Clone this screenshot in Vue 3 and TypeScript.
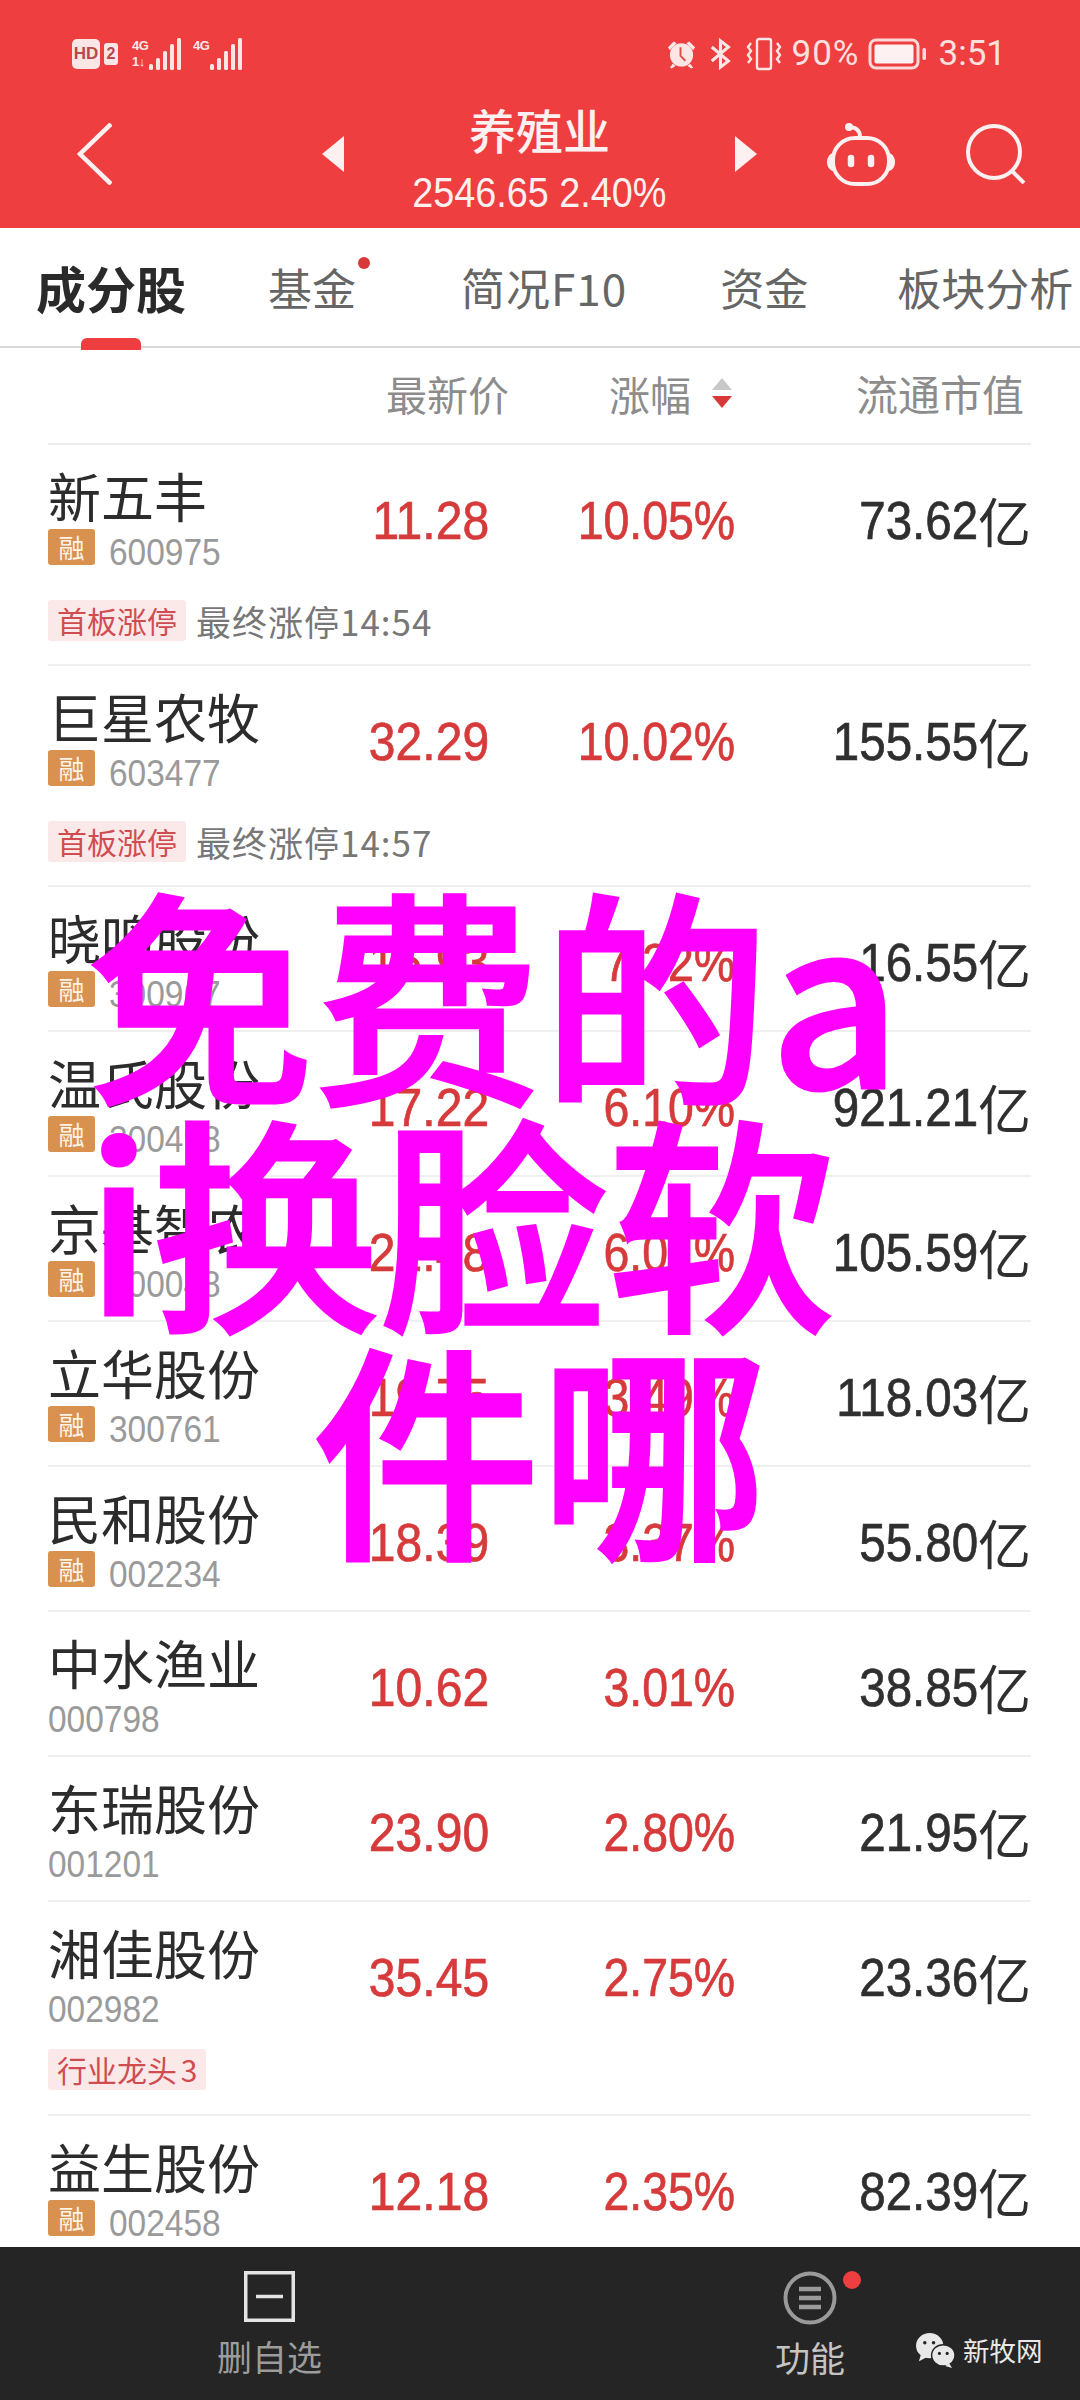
<template>
  <div class="page">
    <header class="top">
      <div class="status">
        <div class="status-left">
          <span class="hd">HD</span>
          <span class="sim">2</span>
          <span class="net">
            <span class="net-type">4G<br />1↓</span>
            <svg width="32" height="32" viewBox="0 0 32 32"><rect v-for="b in signalBars" :key="b.x" :x="b.x" :y="b.y" width="4" :height="32 - b.y" rx="1.5" fill="#fbe6e6" /></svg>
          </span>
          <span class="net">
            <span class="net-type">4G</span>
            <svg width="32" height="32" viewBox="0 0 32 32"><rect v-for="b in signalBars" :key="b.x" :x="b.x" :y="b.y" width="4" :height="32 - b.y" rx="1.5" fill="#fbe6e6" /></svg>
          </span>
        </div>
        <div class="status-right">
          <svg width="31" height="32" viewBox="0 0 32 32" fill="#fbe6e6"><circle cx="16" cy="17" r="12" /><path d="M2 9 8 3l3 2-7 7zM30 9l-6-6-3 2 7 7zM7 26l-3 4 2 1 4-3zM25 26l3 4-2 1-4-3z" /><path d="M15 9v9l5 5" fill="none" stroke="#d9504f" stroke-width="2" /></svg>
          <svg class="st-bt" width="21" height="32" viewBox="0 0 24 34" fill="none" stroke="#fbe6e6" stroke-width="3.5"><path d="M2 9l19 16-9 7V2l9 7L2 25" /></svg>
          <svg class="st-vib" width="38" height="34" viewBox="0 0 38 34" fill="none" stroke="#fbe6e6" stroke-width="2.4"><rect x="12" y="2" width="14" height="30" rx="2" /><path d="M6 6 3 10l3 4-3 4 3 4-3 4M32 6l3 4-3 4 3 4-3 4 3 4" /></svg>
          <span class="pct">90%</span>
          <svg class="battery" width="59" height="32" viewBox="0 0 58 32"><rect x="1.5" y="2" width="48" height="28" rx="6" fill="none" stroke="#fbd9d9" stroke-width="3" /><rect x="6" y="6.5" width="39" height="19" rx="2" fill="#fdf1f1" /><rect x="54" y="10" width="3.5" height="12" rx="1.5" fill="#fbd9d9" /></svg>
          <span class="clock">3:51</span>
        </div>
      </div>
      <div class="nav">
        <svg class="back" width="35" height="62" viewBox="0 0 35 62" fill="none" stroke="#fdf0f0" stroke-width="4.5"><path d="M34 1 3 31l31 30" /></svg>
        <div class="switcher">
          <span class="arrow arrow-left"></span>
          <div class="title">
            <div class="title-name">养殖业</div>
            <div class="title-sub"><span>2546.65 2.40%</span></div>
          </div>
          <span class="arrow arrow-right"></span>
        </div>
        <svg class="robot" width="70" height="63" viewBox="0 0 70 63" fill="none" stroke="#fdf0f0" stroke-width="4"><path d="M23 4c6 0 11 3 11 10" /><circle cx="23" cy="4" r="4" fill="#fdf0f0" stroke="none" /><rect x="7" y="15" width="56" height="46" rx="22" /><path d="M7 30c-4 1-6 5-6 9s2 8 6 9zM63 30c4 1 6 5 6 9s-2 8-6 9z" fill="#fdf0f0" stroke="none" /><path d="M25 35v6M45 35v6" stroke-width="6.5" stroke-linecap="round" /></svg>
        <svg class="search" width="60" height="60" viewBox="0 0 60 60" fill="none" stroke="#fdf0f0" stroke-width="4"><circle cx="28" cy="28" r="26" /><path d="M46 47l12 12" /></svg>
      </div>
    </header>

    <nav class="tabs">
      <div v-for="t in tabs" :key="t.label" class="tab" :class="{ active: t.active }">
        {{ t.label }}
        <i v-if="t.dot" class="tab-dot"></i>
        <i v-if="t.active" class="tab-bar"></i>
      </div>
    </nav>

    <div class="head">
      <span class="col-price">最新价</span>
      <span class="col-pct">涨幅<i class="sort"><b class="up"></b><b class="down"></b></i></span>
      <span class="col-cap">流通市值</span>
    </div>

    <section class="list">
      <article v-for="s in stocks" :key="s.code" class="row">
        <div class="row-main">
          <div class="stock">
            <div class="name">{{ s.name }}</div>
            <div class="code-line">
              <span v-if="s.margin" class="margin">融</span>
              <span class="code">{{ s.code }}</span>
            </div>
          </div>
          <div class="num price"><span>{{ s.price }}</span></div>
          <div class="num change"><span>{{ s.change }}</span></div>
          <div class="num cap"><span>{{ s.cap }}</span><em class="yi">亿</em></div>
        </div>
        <div v-if="s.tag" class="tag-line" :class="{ 'has-note': s.note }">
          <span class="tag">{{ s.tag }}</span>
          <span v-if="s.note" class="note">{{ s.note }}</span>
        </div>
      </article>
    </section>

    <footer class="bottom">
      <div class="action action-del">
        <svg width="51" height="51" viewBox="0 0 51 51" fill="none" stroke="#e4e4e4" stroke-width="3.5"><rect x="1.75" y="1.75" width="47.5" height="47.5" /><path d="M12 25.5h27" /></svg>
        <span>删自选</span>
      </div>
      <div class="action action-fn">
        <svg width="54" height="54" viewBox="0 0 54 54" fill="none" stroke="#9a9a9a"><circle cx="27" cy="27" r="24.5" stroke-width="4" /><path d="M16 18h22M16 27h22M16 36h22" stroke-width="4.5" /></svg>
        <i class="fn-dot"></i>
        <span>功能</span>
      </div>
      <div class="mark">
        <svg width="43" height="37" viewBox="0 0 42 38" fill="#e8e8e8"><ellipse cx="15" cy="14" rx="14" ry="13" /><path d="M6 23l-2 7 8-4z" /><ellipse cx="29" cy="24" rx="12" ry="11" stroke="#252525" stroke-width="1.5" /><path d="M35 32l3 5-7-2z" /><circle cx="10" cy="11" r="1.8" fill="#252525" /><circle cx="19" cy="11" r="1.8" fill="#252525" /><circle cx="25" cy="22" r="1.6" fill="#252525" /><circle cx="33" cy="22" r="1.6" fill="#252525" /></svg>
        <span>新牧网</span>
      </div>
    </footer>

    <div class="overlay">
      <div v-for="line in overlayLines" :key="line" class="overlay-line">{{ line }}</div>
    </div>
  </div>
</template>

<script setup lang="ts">
interface Stock {
  name: string
  code: string
  price: string
  change: string
  cap: string
  margin?: boolean
  tag?: string
  note?: string
}

const signalBars = [
  { x: 0, y: 26 },
  { x: 7, y: 20 },
  { x: 14, y: 13 },
  { x: 21, y: 6 },
  { x: 28, y: 0 }
]

const tabs = [
  { label: '成分股', active: true },
  { label: '基金', dot: true },
  { label: '简况F10' },
  { label: '资金' },
  { label: '板块分析' }
]

const overlayLines = ['免费的a', 'i换脸软', '件哪']

const stocks: Stock[] = [
  { name: '新五丰', code: '600975', price: '11.28', change: '10.05%', cap: '73.62', margin: true, tag: '首板涨停', note: '最终涨停14:54' },
  { name: '巨星农牧', code: '603477', price: '32.29', change: '10.02%', cap: '155.55', margin: true, tag: '首板涨停', note: '最终涨停14:57' },
  { name: '晓鸣股份', code: '300967', price: '16.93', change: '7.32%', cap: '16.55', margin: true },
  { name: '温氏股份', code: '300498', price: '17.22', change: '6.10%', cap: '921.21', margin: true },
  { name: '京基智农', code: '000048', price: '21.48', change: '6.01%', cap: '105.59', margin: true },
  { name: '立华股份', code: '300761', price: '19.75', change: '3.49%', cap: '118.03', margin: true },
  { name: '民和股份', code: '002234', price: '18.39', change: '3.37%', cap: '55.80', margin: true },
  { name: '中水渔业', code: '000798', price: '10.62', change: '3.01%', cap: '38.85' },
  { name: '东瑞股份', code: '001201', price: '23.90', change: '2.80%', cap: '21.95' },
  { name: '湘佳股份', code: '002982', price: '35.45', change: '2.75%', cap: '23.36', tag: '行业龙头 3' },
  { name: '益生股份', code: '002458', price: '12.18', change: '2.35%', cap: '82.39', margin: true }
]
</script>

<style>
html,
body {
  margin: 0;
  background: #fff;
}
</style>

<style scoped>
.page {
  position: relative;
  width: 1080px;
  height: 2400px;
  overflow: hidden;
  display: flex;
  flex-direction: column;
  background: #fff;
  font-family: "Noto Sans CJK SC", "Noto Sans", sans-serif;
}

.top {
  height: 228px;
  flex: none;
  background: #ee3e3f;
  color: #fdf0f0;
}

.status {
  height: 52px;
  padding: 28px 74px 0 72px;
  display: flex;
  justify-content: space-between;
  align-items: center;
}

.status-left,
.status-right {
  display: flex;
  align-items: center;
}

.status-right svg {
  flex: none;
}

.st-bt {
  margin-left: 13px;
}

.st-vib {
  margin-left: 14px;
}

.hd {
  width: 28px;
  height: 30px;
  border-radius: 5px;
  background: #fbe6e6;
  color: #b8484a;
  font: 700 17px/30px "Liberation Sans", sans-serif;
  text-align: center;
}

.sim {
  margin-left: 4px;
  width: 14px;
  height: 22px;
  border-radius: 3px;
  background: #fbe6e6;
  color: #b8484a;
  font: 700 16px/22px "Liberation Sans", sans-serif;
  text-align: center;
}

.net {
  display: flex;
  align-items: flex-end;
  margin-left: 14px;
  height: 32px;
}

.net + .net {
  margin-left: 12px;
}

.net-type {
  align-self: flex-start;
  font: 700 13px/16px "Liberation Sans", sans-serif;
  letter-spacing: -0.5px;
  color: #fbe6e6;
  width: 17px;
  white-space: nowrap;
}

.pct,
.clock {
  font: 400 35px/40px "Roboto", sans-serif;
  color: #fbe0e0;
}

.pct {
  margin-left: 9px;
  letter-spacing: 1px;
}

.battery {
  margin-left: 8px;
}

.clock {
  margin-left: 12px;
}

.nav {
  height: 148px;
  display: flex;
  align-items: center;
  padding-left: 77px;
}

.back {
  flex: none;
}

.switcher {
  margin-left: 210px;
  width: 435px;
  display: flex;
  align-items: center;
  justify-content: space-between;
  flex: none;
}

.arrow {
  width: 0;
  height: 0;
  border-top: 18px solid transparent;
  border-bottom: 18px solid transparent;
}

.arrow-left {
  border-right: 22px solid #fdf0f0;
}

.arrow-right {
  border-left: 22px solid #fdf0f0;
}

.title {
  text-align: center;
  margin-top: 11px;
}

.title-name {
  font-size: 47px;
  line-height: 56px;
  font-weight: 500;
}

.title-sub {
  font: 400 42px/50px "Liberation Sans", sans-serif;
  margin-top: 11px;
  white-space: nowrap;
}

.title-sub span {
  display: inline-block;
  transform: scaleX(0.9);
}

.robot {
  margin-left: 69px;
  flex: none;
}

.search {
  margin-left: 70px;
  flex: none;
}

.tabs {
  height: 120px;
  flex: none;
  box-sizing: border-box;
  border-bottom: 2px solid #d9d9d9;
  display: flex;
  align-items: flex-start;
  padding-left: 36px;
  white-space: nowrap;
}

.tab {
  position: relative;
  margin-top: 34px;
  font-size: 44px;
  line-height: 50px;
  color: #666;
}

.tab:nth-child(2) {
  margin-left: 82px;
}

.tab:nth-child(3) {
  margin-left: 105px;
  letter-spacing: 1px;
}

.tab:nth-child(4) {
  margin-left: 93px;
}

.tab:nth-child(5) {
  margin-left: 89px;
}

.tab.active {
  font-size: 50px;
  font-weight: 700;
  color: #2a2a2a;
}

.tab-dot {
  position: absolute;
  right: -14px;
  top: -5px;
  width: 12px;
  height: 12px;
  border-radius: 50%;
  background: #d8383a;
}

.tab-bar {
  position: absolute;
  left: 45px;
  bottom: -38px;
  width: 60px;
  height: 12px;
  border-radius: 6px 6px 0 0;
  background: #ee3e3f;
}

.head {
  height: 97px;
  flex: none;
  box-sizing: border-box;
  margin: 0 49px 0 48px;
  padding: 0 7px 6px 338px;
  border-bottom: 2px solid #ececec;
  display: flex;
  align-items: center;
  font-size: 41px;
  line-height: 56px;
  color: #8c8c8c;
}

.col-pct {
  margin-left: 100px;
  display: flex;
  align-items: center;
}

.col-cap {
  margin-left: auto;
  font-size: 42px;
}

.sort {
  margin-left: 21px;
  display: flex;
  flex-direction: column;
  gap: 6px;
}

.sort b {
  width: 0;
  height: 0;
  border-left: 10px solid transparent;
  border-right: 10px solid transparent;
}

.sort .up {
  border-bottom: 12px solid #c8c8c8;
}

.sort .down {
  border-top: 12px solid #d8383a;
}

.row {
  margin: 0 49px 0 48px;
  border-bottom: 2px solid #efefef;
  box-sizing: border-box;
}

.row-main {
  height: 143px;
  display: grid;
  grid-template-columns: 300px 141px 246px 1fr;
}

.stock {
  padding-top: 18px;
}

.name {
  font-size: 53px;
  line-height: 64px;
  color: #2c2c2c;
  white-space: nowrap;
}

.code-line {
  display: flex;
  align-items: center;
  margin-top: 3px;
  height: 38px;
}

.margin {
  width: 47px;
  height: 36px;
  margin: 0 14px 4px 0;
  border-radius: 3px;
  background: #d9914f;
  color: #fdf3e7;
  font-size: 26px;
  line-height: 36px;
  text-align: center;
}

.code {
  font: 400 36px/38px "Liberation Sans", sans-serif;
  color: #9a9a9a;
  margin-top: 8px;
  display: inline-block;
  transform: scaleX(0.93);
  transform-origin: left center;
}

.num {
  margin-top: 44px;
  font: 400 54px/62px "Liberation Sans", sans-serif;
  white-space: nowrap;
  display: flex;
  justify-content: flex-end;
  align-items: center;
  height: 62px;
}

.num span {
  display: inline-block;
  -webkit-text-stroke: 0.7px currentColor;
  transform: scaleX(0.86);
  transform-origin: right center;
}

.price span {
  transform: scaleX(0.89);
}

.cap span {
  transform: scaleX(0.88);
}

.price,
.change {
  color: #d63a3b;
}

.cap {
  color: #2f2f2f;
}

.yi {
  font-family: "Noto Sans CJK SC", sans-serif;
  font-style: normal;
  font-size: 53px;
}

.tag-line {
  display: flex;
  align-items: center;
  height: 41px;
  margin-top: 4px;
  padding-bottom: 24px;
}

.tag-line.has-note {
  height: 42px;
  margin-top: 11px;
  padding-bottom: 23px;
}

.tag {
  height: 41px;
  padding: 0 9px;
  border-radius: 3px;
  background: #fbe8e8;
  color: #cf4d50;
  font-size: 30px;
  line-height: 41px;
  word-spacing: -3px;
  white-space: nowrap;
}

.note {
  margin-left: 10px;
  font-size: 35px;
  line-height: 41px;
  letter-spacing: 1px;
  color: #777;
  white-space: nowrap;
}

.bottom {
  position: absolute;
  left: 0;
  right: 0;
  bottom: 0;
  height: 153px;
  background: #252525;
  color: #9c9c9c;
}

.action {
  position: absolute;
  top: 24px;
  display: flex;
  flex-direction: column;
  align-items: center;
  font-size: 35px;
  line-height: 44px;
  gap: 12px;
}

.action-del {
  left: 217px;
  width: 105px;
}

.action-fn {
  left: 775px;
  width: 70px;
  color: #c4c4c4;
  gap: 10px;
}

.fn-dot {
  position: absolute;
  left: 68px;
  top: 0;
  width: 18px;
  height: 18px;
  border-radius: 50%;
  background: #ee3e3f;
}

.mark {
  position: absolute;
  left: 914px;
  top: 84px;
  display: flex;
  align-items: center;
  gap: 6px;
  color: #e8e8e8;
  font-size: 26.5px;
  line-height: 38px;
  white-space: nowrap;
}

.overlay {
  position: absolute;
  left: 0;
  right: 0;
  top: 876px;
  text-align: center;
  color: #ff00ff;
  font-size: 228px;
  line-height: 227px;
  font-weight: 500;
  -webkit-text-stroke: 3px #ff00ff;
  pointer-events: none;
}

.overlay-line {
  white-space: nowrap;
}

.overlay-line:nth-child(-n + 2) {
  text-align: left;
  padding-left: 86px;
}
</style>
